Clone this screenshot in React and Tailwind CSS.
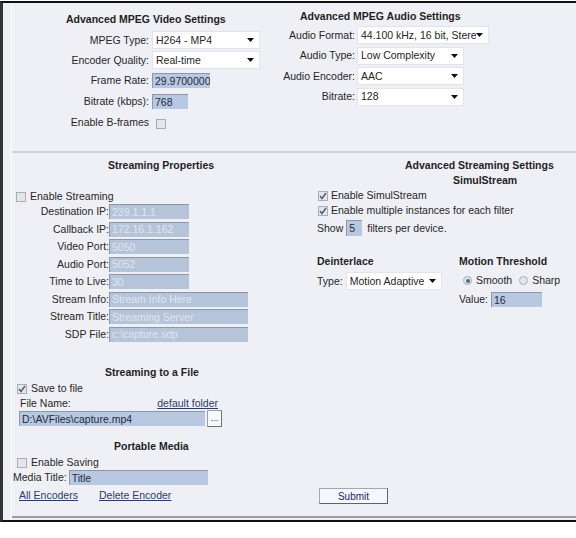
import React from 'react'

const font = { fontFamily: '"Liberation Sans", Arial, sans-serif' }

function Arrow() {
  return (
    <svg width="7" height="4" viewBox="0 0 7 4" className="shrink-0">
      <path d="M0 0 L7 0 L3.5 4 Z" fill="#111" />
    </svg>
  )
}

function Select({ value, w }) {
  return (
    <div className={`flex h-[18px] items-center justify-between border border-[#e2e4ea] bg-white pl-[3px] pr-[5px] ${w} overflow-hidden whitespace-nowrap`}>
      <span className="overflow-hidden">{value}</span>
      <Arrow />
    </div>
  )
}

function Input({ value, w, disabled }) {
  return (
    <div
      className={`flex h-[15px] shrink-0 items-center overflow-hidden whitespace-nowrap border-t border-l border-[#8c97aa] pl-[2px] ${w} ${
        disabled ? 'bg-[#b6c4da] text-[#dfe6f0]' : 'bg-[#b8c8e0] text-[#1e2a44]'
      }`}
    >
      {value}
    </div>
  )
}

function Check({ checked }) {
  return (
    <div className="flex h-[10px] w-[10px] shrink-0 items-center justify-center border border-[#a9adb5] bg-[#e4e6ea]">
      {checked && (
        <svg width="8" height="8" viewBox="0 0 8 8">
          <path d="M1 4 L3 6.5 L7 1" stroke="#4a5a78" strokeWidth="1.4" fill="none" />
        </svg>
      )}
    </div>
  )
}

function Radio({ checked }) {
  return (
    <div className="flex h-[9px] w-[9px] items-center justify-center rounded-full border border-[#a9adb5] bg-[#e4e6ea]">
      {checked && <div className="h-[4px] w-[4px] rounded-full bg-[#4f6890]" />}
    </div>
  )
}

function Row({ label, lw, children, h = 'h-[21px]' }) {
  return (
    <div className={`flex items-center ${h}`}>
      <div className={`${lw} flex shrink-0 justify-end whitespace-nowrap`}>{label}</div>
      {children}
    </div>
  )
}

export default function App() {
  return (
    <div className="h-[538px] w-[576px] bg-white text-[10.5px] leading-[13px] text-[#262626]" style={font}>
      <div className="mt-[1px] flex h-[521px] flex-col border-t-2 border-l-[3px] border-b-2 border-t-[#111] border-l-[#333] border-b-[#111] bg-[#eff0f5]">
        <div className="ml-[8px] flex flex-1 flex-col border-l border-l-[#fafbfd] pb-[2px]">
          <div className="flex flex-1 flex-col border-b-2 border-b-[#9a9da3]">
            {/* Top section */}
            <div className="flex h-[150px] shrink-0 border-b-2 border-b-[#cfd2d8]">
              <div className="w-[277px] pt-[10px]">
                <div className="pl-[54px] font-bold text-[#1f1f1f]">Advanced MPEG Video Settings</div>
                <div className="mt-[4px] flex flex-col">
                  <Row label="MPEG Type:" lw="w-[137px]" h="h-[20px]">
                    <div className="ml-[3px]"><Select value="H264 - MP4" w="w-[108px]" /></div>
                  </Row>
                  <Row label="Encoder Quality:" lw="w-[137px]" h="h-[20px]">
                    <div className="ml-[3px]"><Select value="Real-time" w="w-[108px]" /></div>
                  </Row>
                  <Row label="Frame Rate:" lw="w-[137px]">
                    <div className="ml-[3px]"><Input value="29.9700000" w="w-[58px]" /></div>
                  </Row>
                  <Row label="Bitrate (kbps):" lw="w-[137px]">
                    <div className="ml-[3px]"><Input value="768" w="w-[36px]" /></div>
                  </Row>
                  <Row label="Enable B-frames" lw="w-[137px]">
                    <div className="ml-[7px] mt-[3px]"><Check /></div>
                  </Row>
                </div>
              </div>
              <div className="flex-1 pt-[7px]">
                <div className="pl-[11px] font-bold text-[#1f1f1f]">Advanced MPEG Audio Settings</div>
                <div className="mt-[2px] flex flex-col">
                  <Row label="Audio Format:" lw="w-[66px]" h="h-[20.5px]">
                    <div className="ml-[2px]"><Select value="44.100 kHz, 16 bit, Stere" w="w-[132px]" /></div>
                  </Row>
                  <Row label="Audio Type:" lw="w-[66px]" h="h-[20.5px]">
                    <div className="ml-[2px]"><Select value="Low Complexity" w="w-[107px]" /></div>
                  </Row>
                  <Row label="Audio Encoder:" lw="w-[66px]" h="h-[20.5px]">
                    <div className="ml-[2px]"><Select value="AAC" w="w-[107px]" /></div>
                  </Row>
                  <Row label="Bitrate:" lw="w-[66px]" h="h-[20.5px]">
                    <div className="ml-[2px]"><Select value="128" w="w-[107px]" /></div>
                  </Row>
                </div>
              </div>
            </div>

            {/* Bottom section */}
            <div className="flex flex-1">
              <div className="flex w-[296px] flex-col pt-[6px]">
                <div className="pl-[96px] font-bold text-[#1f1f1f]">Streaming Properties</div>
                <div className="mt-[18px] flex h-[13px] items-center gap-[4px] pl-[4px]">
                  <Check />
                  <span>Enable Streaming</span>
                </div>
                <div className="flex flex-col">
                  <Row label="Destination IP:" lw="w-[97px]" h="h-[17.5px]">
                    <Input value="239.1.1.1" w="w-[80px]" disabled />
                  </Row>
                  <Row label="Callback IP:" lw="w-[97px]" h="h-[17.5px]">
                    <Input value="172.16.1.162" w="w-[80px]" disabled />
                  </Row>
                  <Row label="Video Port:" lw="w-[97px]" h="h-[17.5px]">
                    <Input value="5050" w="w-[80px]" disabled />
                  </Row>
                  <Row label="Audio Port:" lw="w-[97px]" h="h-[17.5px]">
                    <Input value="5052" w="w-[80px]" disabled />
                  </Row>
                  <Row label="Time to Live:" lw="w-[97px]" h="h-[17.5px]">
                    <Input value="30" w="w-[80px]" disabled />
                  </Row>
                  <Row label="Stream Info:" lw="w-[97px]" h="h-[17.5px]">
                    <Input value="Stream Info Here" w="w-[139px]" disabled />
                  </Row>
                  <Row label="Stream Title:" lw="w-[97px]" h="h-[17.5px]">
                    <Input value="Streaming Server" w="w-[139px]" disabled />
                  </Row>
                  <Row label="SDP File:" lw="w-[97px]" h="h-[17.5px]">
                    <Input value="c:\capture.sdp" w="w-[139px]" disabled />
                  </Row>
                </div>

                <div className="mt-[23px] pl-[93px] font-bold text-[#1f1f1f]">Streaming to a File</div>
                <div className="mt-[3px] flex h-[13px] items-center gap-[4px] pl-[5px]">
                  <Check checked />
                  <span>Save to file</span>
                </div>
                <div className="mt-[2px] flex w-[206px] justify-between pl-[8px]">
                  <span>File Name:</span>
                  <span className="text-[#2c3b6a] underline">default folder</span>
                </div>
                <div className="flex items-center gap-[2px] pl-[7px]">
                  <Input value="D:\AVFiles\capture.mp4" w="w-[186px]" />
                  <div className="flex h-[17px] w-[15px] items-center justify-center border border-[#9aa0aa] border-b-[#6c717a] border-r-[#6c717a] bg-[#f7f8fb] text-[9px] leading-none text-[#333]">
                    ...
                  </div>
                </div>
                <div className="mt-[13px] pl-[102px] font-bold text-[#1f1f1f]">Portable Media</div>
                <div className="mt-[3px] flex h-[13px] items-center gap-[4px] pl-[5px]">
                  <Check />
                  <span>Enable Saving</span>
                </div>
                <div className="mt-[1px] flex items-center gap-[2px] pl-[1px]">
                  <span>Media Title:</span>
                  <Input value="Title" w="w-[139px]" />
                </div>
                <div className="mt-[4px] flex gap-[21px] pl-[7px] text-[#2c3b6a] underline">
                  <span>All Encoders</span>
                  <span>Delete Encoder</span>
                </div>
              </div>

              <div className="flex flex-1 flex-col pt-[6px]">
                <div className="pl-[97px] font-bold text-[#1f1f1f]">Advanced Streaming Settings</div>
                <div className="mt-[2px] pl-[145px] font-bold text-[#1f1f1f]">SimulStream</div>
                <div className="mt-[2px] flex h-[13px] items-center gap-[3px] pl-[10px]">
                  <Check checked />
                  <span>Enable SimulStream</span>
                </div>
                <div className="mt-[2px] flex h-[13px] items-center gap-[3px] pl-[10px]">
                  <Check checked />
                  <span>Enable multiple instances for each filter</span>
                </div>
                <div className="mt-[3px] flex items-center pl-[9px]">
                  <span>Show</span>
                  <div className="ml-[3px] mr-[5px]">
                    <div className="flex h-[16px] w-[16px] items-center border-t border-l border-[#8c97aa] bg-[#b8c8e0] pl-[2px] text-[#1e2a44]">5</div>
                  </div>
                  <span>filters per device.</span>
                </div>
                <div className="mt-[19px] flex pl-[9px]">
                  <div className="w-[142px]">
                    <div className="font-bold text-[#1f1f1f]">Deinterlace</div>
                    <div className="mt-[4px] flex items-center gap-[3px]">
                      <span>Type:</span>
                      <Select value="Motion Adaptive" w="w-[96px]" />
                    </div>
                  </div>
                  <div>
                    <div className="font-bold text-[#1f1f1f]">Motion Threshold</div>
                    <div className="mt-[6px] flex h-[13px] items-center pl-[4px]">
                      <Radio checked />
                      <span className="ml-[4px]">Smooth</span>
                      <div className="ml-[7px]"><Radio /></div>
                      <span className="ml-[4px]">Sharp</span>
                    </div>
                    <div className="mt-[5px] flex items-center gap-[3px]">
                      <span>Value:</span>
                      <Input value="16" w="w-[51px]" />
                    </div>
                  </div>
                </div>
                <div className="mt-auto mb-[12px] ml-[11px]">
                  <div className="flex h-[16px] w-[69px] items-center justify-center border border-[#a4a8b0] border-b-[#5e626a] border-r-[#5e626a] bg-[#f4f7fd] text-[10px] text-[#1d2a63]">
                    Submit
                  </div>
                </div>
              </div>
            </div>
          </div>
        </div>
      </div>
    </div>
  )
}
